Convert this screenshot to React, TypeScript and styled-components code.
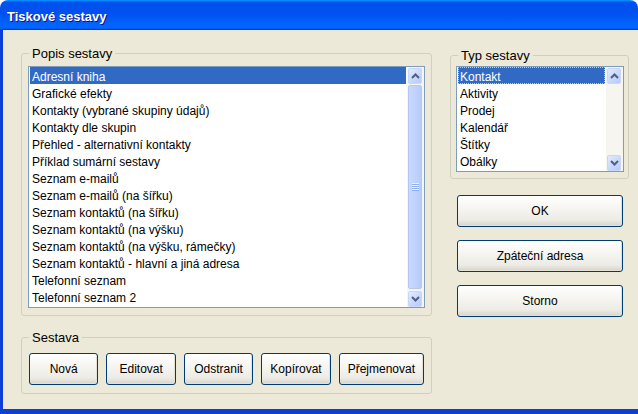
import * as React from 'react';
import styled, { createGlobalStyle } from 'styled-components';

const GlobalStyle = createGlobalStyle`
  *, *::before, *::after {
    box-sizing: border-box;
  }
  html, body {
    margin: 0;
    padding: 0;
    background: #fff;
    font-family: 'Liberation Sans', Arial, sans-serif;
  }
`;

const Window = styled.div`
  width: 638px;
  height: 414px;
  display: flex;
  flex-direction: column;
  font-family: 'Liberation Sans', Arial, sans-serif;
  font-size: 12px;
  color: #000;
`;

const TitleBar = styled.div`
  flex: none;
  height: 30px;
  display: flex;
  align-items: center;
  padding: 3px 0 0 7px;
  border-radius: 8px 8px 0 0;
  background: linear-gradient(
    180deg,
    #0997ff,
    #0053ee 8%,
    #0050ee 40%,
    #0066ff 88%,
    #0066ff 93%,
    #005bff 95%,
    #003dd7 96%,
    #003dd7
  );
`;

const Title = styled.span`
  color: #fff;
  font-size: 13px;
  font-weight: bold;
  text-shadow: 1px 1px #0f1089;
`;

const Body = styled.div`
  flex: 1;
  display: flex;
  gap: 18px;
  padding: 23px 0 0 18px;
  background: #ece9d8;
  border-style: solid;
  border-color: #0b3fd6;
  border-width: 0 0 5px 3px;
`;

const Column = styled.div<{ $width: number; $top?: number }>`
  width: ${({ $width }) => $width}px;
  padding-top: ${({ $top }) => $top || 0}px;
  display: flex;
  flex-direction: column;
`;

const GroupBox = styled.div<{ $pad: string; $gap?: number }>`
  position: relative;
  border: 1px solid #d0d0bf;
  border-radius: 3px;
  padding: ${({ $pad }) => $pad};
  margin-top: ${({ $gap }) => $gap || 0}px;
`;

const Caption = styled.span`
  position: absolute;
  top: -8px;
  left: 7px;
  padding: 0 3px;
  background: #ece9d8;
  font-size: 13px;
  line-height: 16px;
`;

const ListBox = styled.div<{ $height: number }>`
  height: ${({ $height }) => $height}px;
  display: flex;
  border: 1px solid #7f9db9;
  background: #fff;
`;

const Items = styled.ul`
  flex: 1;
  margin: 0;
  padding: 0 1px;
  list-style: none;
  overflow: hidden;
`;

const Item = styled.li<{ $selected?: boolean; $focused?: boolean }>`
  height: 17px;
  line-height: 16px;
  padding: 2px 0 0 2px;
  white-space: nowrap;
  background: ${({ $selected }) => ($selected ? '#316ac5' : 'transparent')};
  color: ${({ $selected }) => ($selected ? '#fff' : '#000')};
  outline: ${({ $focused }) => ($focused ? '1px dotted #f0c870' : 'none')};
  outline-offset: -1px;
`;

const ScrollBar = styled.div`
  flex: none;
  width: 17px;
  display: flex;
  flex-direction: column;
  background: #f6f5ef;
`;

const ArrowButton = styled.div`
  flex: none;
  height: 16px;
  margin: 1px 2px 0 1px;
  display: flex;
  align-items: center;
  justify-content: center;
  border: 1px solid #c6d6fc;
  border-radius: 2px;
  background: linear-gradient(135deg, #e3ebfe 0%, #c8d8fc 55%, #b7cbf8 100%);
`;

const Thumb = styled.div`
  flex: 1;
  margin: 1px 2px 1px 1px;
  display: flex;
  align-items: center;
  justify-content: center;
  border: 1px solid #b4c8f6;
  border-radius: 2px;
  background: linear-gradient(90deg, #cad9fd 0%, #c1d3fc 50%, #b6cbf9 100%);
`;

const Grip = styled.span`
  width: 7px;
  height: 8px;
  background: repeating-linear-gradient(180deg, #eef4ff 0 1px, #8daff3 1px 2px);
`;

const Track = styled.div`
  flex: 1;
`;

const ButtonRow = styled.div`
  display: flex;
  gap: 8px;
`;

const ButtonStack = styled.div`
  display: flex;
  flex-direction: column;
  gap: 13px;
  margin: 16px 0 0 7px;
  width: 166px;
`;

const Button = styled.button<{ $width?: number }>`
  height: 32px;
  width: ${({ $width }) => ($width ? `${$width}px` : '100%')};
  padding: 0;
  border: 1px solid #003c74;
  border-radius: 3px;
  background: linear-gradient(180deg, #ffffff 0%, #f5f4ef 45%, #ecebe5 80%, #d8d3c8 100%);
  box-shadow: inset -1px -1px 0 #e3e0d6;
  font-family: 'Liberation Sans', Arial, sans-serif;
  font-size: 12px;
  font-weight: normal;
  color: #000;
`;

const Arrow = ({ down }: { down?: boolean }) => (
  <svg width="9" height="6" viewBox="0 0 9 6" style={down ? { transform: 'rotate(180deg)' } : undefined}>
    <path d="M1 5 L4.5 1.5 L8 5" fill="none" stroke="#4d6185" strokeWidth="2" />
  </svg>
);

const reports = [
  'Adresní kniha',
  'Grafické efekty',
  'Kontakty (vybrané skupiny údajů)',
  'Kontakty dle skupin',
  'Přehled - alternativní kontakty',
  'Příklad sumární sestavy',
  'Seznam e-mailů',
  'Seznam e-mailů (na šířku)',
  'Seznam kontaktů (na šířku)',
  'Seznam kontaktů (na výšku)',
  'Seznam kontaktů (na výšku, rámečky)',
  'Seznam kontaktů - hlavní a jiná adresa',
  'Telefonní seznam',
  'Telefonní seznam 2',
];

const types = ['Kontakt', 'Aktivity', 'Prodej', 'Kalendář', 'Štítky', 'Obálky'];

const actions: [string, number][] = [
  ['Nová', 70],
  ['Editovat', 70],
  ['Odstranit', 70],
  ['Kopírovat', 70],
  ['Přejmenovat', 86],
];

const App = () => (
  <>
    <GlobalStyle />
    <Window>
      <TitleBar>
        <Title>Tiskové sestavy</Title>
      </TitleBar>
      <Body>
        <Column $width={411}>
          <GroupBox $pad="12px 6px 7px 6px">
            <Caption>Popis sestavy</Caption>
            <ListBox $height={242}>
              <Items>
                {reports.map((name, i) => (
                  <Item key={name} $selected={i === 0}>
                    {name}
                  </Item>
                ))}
              </Items>
              <ScrollBar>
                <ArrowButton>
                  <Arrow />
                </ArrowButton>
                <Thumb>
                  <Grip />
                </Thumb>
                <ArrowButton>
                  <Arrow down />
                </ArrowButton>
              </ScrollBar>
            </ListBox>
          </GroupBox>
          <GroupBox $pad="15px 7px 8px 7px" $gap={21}>
            <Caption>Sestava</Caption>
            <ButtonRow>
              {actions.map(([label, width]) => (
                <Button key={label} $width={width}>
                  {label}
                </Button>
              ))}
            </ButtonRow>
          </GroupBox>
        </Column>
        <Column $width={179} $top={2}>
          <GroupBox $pad="10px 4px 6px 5px">
            <Caption>Typ sestavy</Caption>
            <ListBox $height={106}>
              <Items>
                {types.map((name, i) => (
                  <Item key={name} $selected={i === 0} $focused={i === 0}>
                    {name}
                  </Item>
                ))}
              </Items>
              <ScrollBar>
                <ArrowButton>
                  <Arrow />
                </ArrowButton>
                <Track />
                <ArrowButton>
                  <Arrow down />
                </ArrowButton>
              </ScrollBar>
            </ListBox>
          </GroupBox>
          <ButtonStack>
            <Button>OK</Button>
            <Button>Zpáteční adresa</Button>
            <Button>Storno</Button>
          </ButtonStack>
        </Column>
      </Body>
    </Window>
  </>
);

export default App;
